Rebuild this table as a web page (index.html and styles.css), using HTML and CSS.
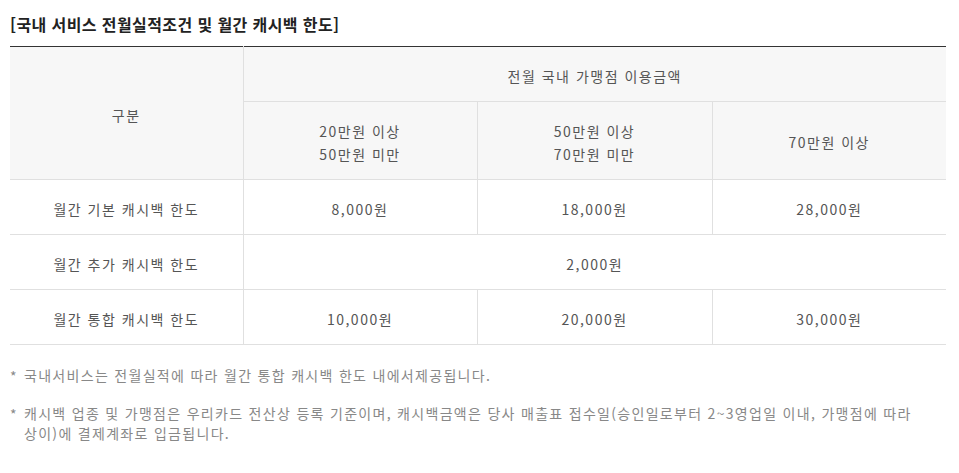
FILE: index.html
```html
<!DOCTYPE html>
<html lang="ko">
<head>
<meta charset="utf-8">
<link rel="stylesheet" href="styles.css">
</head>
<body>
<div class="wrap">
  <h3 class="title">[국내 서비스 전월실적조건 및 월간 캐시백 한도]</h3>
  <table class="tbl">
    <colgroup>
      <col class="c1"><col class="c2"><col class="c3"><col class="c4">
    </colgroup>
    <thead>
      <tr class="h1">
        <th rowspan="2">구분</th>
        <th colspan="3">전월 국내 가맹점 이용금액</th>
      </tr>
      <tr class="h2">
        <th>20만원 이상<br>50만원 미만</th>
        <th>50만원 이상<br>70만원 미만</th>
        <th>70만원 이상</th>
      </tr>
    </thead>
    <tbody>
      <tr>
        <td>월간 기본 캐시백 한도</td>
        <td>8,000원</td>
        <td>18,000원</td>
        <td>28,000원</td>
      </tr>
      <tr>
        <td>월간 추가 캐시백 한도</td>
        <td colspan="3">2,000원</td>
      </tr>
      <tr>
        <td>월간 통합 캐시백 한도</td>
        <td>10,000원</td>
        <td>20,000원</td>
        <td>30,000원</td>
      </tr>
    </tbody>
  </table>
  <ul class="notes">
    <li>국내서비스는 전월실적에 따라 월간 통합 캐시백 한도 내에서제공됩니다.</li>
    <li>캐시백 업종 및 가맹점은 우리카드 전산상 등록 기준이며, 캐시백금액은 당사 매출표 접수일(승인일로부터 2~3영업일 이내, 가맹점에 따라<br>상이)에 결제계좌로 입금됩니다.</li>
  </ul>
</div>
</body>
</html>
```

FILE: styles.css
```css
html, body {
  margin: 0;
  padding: 0;
  background: #fff;
}
body {
  font-family: "Noto Sans CJK KR", "Noto Sans", sans-serif;
  color: #555;
}
.wrap {
  padding: 0 13px 0 10px;
}
.title {
  margin: 0;
  padding-top: 12px;
  height: 46px;
  box-sizing: border-box;
  font-size: 16px;
  line-height: 24px;
  font-weight: bold;
  color: #222;
  letter-spacing: 0.4px;
}
.tbl {
  width: 936px;
  border-collapse: collapse;
  table-layout: fixed;
  border-top: 1px solid #333;
}
.c1 { width: 233px; }
.c2 { width: 234px; }
.c3 { width: 235px; }
.c4 { width: 234px; }
.tbl th, .tbl td {
  border: 1px solid #e0e0e0;
  text-align: center;
  vertical-align: middle;
  font-size: 14px;
  font-weight: normal;
  letter-spacing: 1.5px;
  color: #555;
  line-height: 23px;
  padding: 4px 0 0;
}
.tbl th:first-child, .tbl td:first-child { border-left: none; }
.tbl th:last-child, .tbl td:last-child { border-right: none; }
.tbl thead th {
  background: #f7f7f7;
}
.tbl thead tr:first-child th {
  border-top: 1px solid #333;
}
.h1 { height: 55px; }
.h2 { height: 78px; }
.tbl tbody tr { height: 55px; }
.notes {
  list-style: none;
  margin: 20px 0 0;
  padding: 0;
  color: #888;
  font-size: 14px;
  letter-spacing: 1.3px;
  line-height: 20px;
}
.notes li {
  position: relative;
  padding-left: 14px;
  margin-bottom: 18px;
}
.notes li::before {
  content: "*";
  position: absolute;
  left: 0;
  top: 1px;
}
```
